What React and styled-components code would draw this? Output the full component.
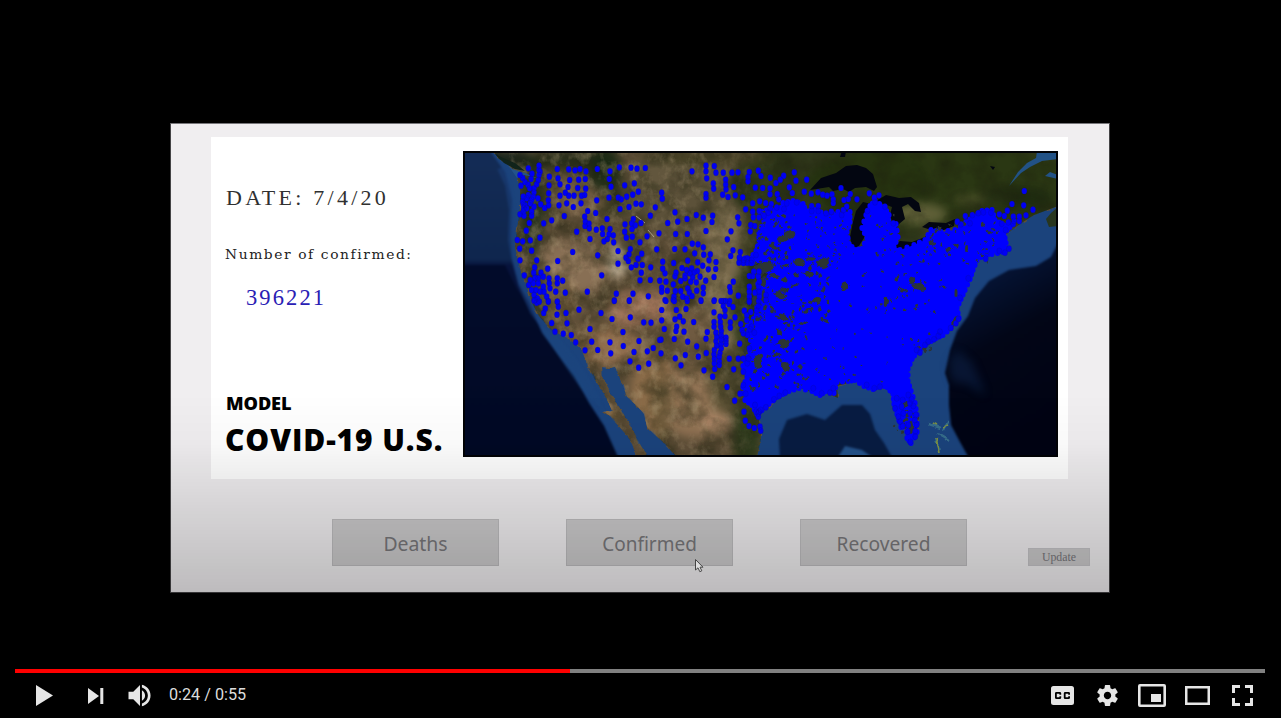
import React from "react";
import styled, { createGlobalStyle } from "styled-components";

const GlobalStyle = createGlobalStyle`
  * { box-sizing: border-box; }
  body { margin: 0; background: #000; overflow: hidden; }
`;

const Player = styled.main`
  position: relative;
  display: flex;
  flex-direction: column;
  width: 1281px;
  height: 718px;
  background: #000;
  overflow: hidden;
`;

const Stage = styled.section`
  height: 669px;
  padding: 123px 0 0 170px;
`;

const Window = styled.div`
  position: relative;
  display: flex;
  flex-direction: column;
  width: 940px;
  height: 470px;
  padding: 13px 41px 0;
  background: #f0eef0;
  border: 1px solid #454446;
  border-top-color: #77767a;
`;

const Shade = styled.div`
  position: absolute;
  inset: 270px -1px -1px;
  background: linear-gradient(rgba(0, 0, 0, 0), rgba(0, 0, 0, 0.025) 25%, rgba(0, 0, 0, 0.07) 42%, rgba(0, 0, 0, 0.21));
  pointer-events: none;
`;

const Card = styled.div`
  display: flex;
  width: 857px;
  height: 342px;
  margin-left: -1px;
  background: #fff;
`;

const Info = styled.div`
  display: flex;
  flex-direction: column;
  width: 252px;
  padding: 46px 0 0 15px;
  white-space: nowrap;
`;

const Readout = styled.div`
  font-family: ${(p) => p.$face || '"Liberation Serif"'}, serif;
  font-size: ${(p) => p.$size}px;
  line-height: 30px;
  letter-spacing: ${(p) => p.$track}px;
  color: ${(p) => p.$color};
  margin: ${(p) => p.$margin};
`;

const Title = styled.div`
  font-family: "Open Sans", sans-serif;
  font-weight: 800;
  font-size: ${(p) => p.$size}px;
  line-height: ${(p) => p.$line}px;
  letter-spacing: ${(p) => p.$track}px;
  color: #000;
  margin: ${(p) => p.$top || 0}px 0 0 ${(p) => p.$left || 0}px;
`;

const MapFrame = styled.svg`
  display: block;
  width: 595px;
  height: 306px;
  margin-top: 14px;
`;

const Actions = styled.div`
  display: flex;
  align-items: flex-start;
  padding: 40px 0 0 120px;
`;

const ActionButton = styled.button`
  width: 167px;
  height: 47px;
  flex: none;
  margin-right: ${(p) => p.$gap}px;
  padding: 1px 0 0;
  border: 1px solid #bdbcbe;
  background: #cbcacb;
  color: #78777a;
  font: ${(p) => p.$size || 19.6}px/46px "Noto Sans", sans-serif;
`;

const UpdateButton = styled.button`
  width: 62px;
  height: 18px;
  flex: none;
  margin-top: 29px;
  padding: 0;
  border: 1px solid #c4c3c6;
  background: #cac9ca;
  color: #77767a;
  font: 11.8px/16px "Liberation Serif", serif;
`;

const Pointer = styled.svg`
  position: absolute;
  left: 694px;
  top: 558px;
  width: 10px;
  height: 15px;
`;

const Track = styled.div`
  height: 4px;
  margin: 0 16px 0 15px;
  background: #808080;
`;

const Played = styled.div`
  width: 555px;
  height: 4px;
  background: #f00;
`;

const Controls = styled.div`
  display: flex;
  justify-content: space-between;
  height: 45px;
  padding: 0 28px 0 36px;
`;

const Group = styled.div`
  display: flex;
  align-items: center;
`;

const Icon = styled.svg`
  display: block;
  flex: none;
  width: ${(p) => p.$w}px;
  height: ${(p) => p.$h}px;
  margin-left: ${(p) => p.$left || 0}px;
  fill: #e6e6e6;
`;

const Time = styled.span`
  margin-left: 17px;
  margin-top: -2px;
  font: 16.2px/20px Roboto, sans-serif;
  color: #ddd;
  white-space: pre;
`;

// Each sheet: tile origin, then x,y pairs at three units per map pixel.
const SHEETS = [
  [460, 145, `205,70 237,62 237,75 237,90 292,72 326,73 345,76 360,72 378,79 412,72 450,79 478,67 513,68 531,71 556,69
   180,90 188,99 216,86 213,102 195,111 204,119 209,130 235,105 230,118 222,130 222,142 183,122 268,95 294,100 329,105 356,104 376,102 448,102
   267,121 300,118 324,126 353,129 377,131 453,125 494,121 523,115 240,80 266,145 265,166 266,181 254,189 234,160 242,178 220,155 215,165 200,160 190,155 188,170
   195,180 200,190 190,200 180,208 192,212 215,200 215,212 222,185 205,150 191,190 190,178 211,175 300,152 316,143 326,152 342,152 365,152 374,150 410,166 447,158 475,158 484,163 500,155 518,149 535,140
   297,181 320,175 340,186 363,175 383,198 407,204 480,192 507,186 528,176 544,178 586,187 571,212 313,213 275,226 251,235 208,234 199,257 240,278 211,286 188,289 172,285 179,311 215,317 180,346 230,346
   350,260 374,215 376,230 375,243 387,236 388,250 409,254 390,282 441,222 427,250 428,267 450,252 447,268 442,282 432,289 460,271 461,292 495,238 520,222 515,235 526,241 543,234 516,252 494,260 499,278 517,275 561,274 597,265 540,292 590,313
   338,321 413,331 293,348 474,318 474,356 511,312 507,328 498,338 505,348 545,326 534,341 528,360 547,360 514,367 572,367 425,391 382,440 316,443 544,383 540,406 571,405 599,407 469,446 463,466 508,466 519,446 565,454
   224,367 263,371 193,391 221,383 243,383 211,405 225,398 235,400 250,395 267,400 292,400 308,407 206,420 220,415 235,415 250,425 268,415 270,430 292,415 287,440 215,435 228,435 240,440 252,440 260,455 265,470 222,450 232,460 238,470 225,465 292,470`],
  [660, 145, `96,79 138,62 138,79 140,100 163,63 168,83 190,83 216,83 234,82 268,81 295,77 303,93 264,96 264,109 197,104 197,119 160,115 161,131 198,133 221,126 286,128 308,129 331,98 371,92 361,104 348,114 403,82 408,107 440,104 388,127 397,144 433,140 330,130 330,148 352,147 356,163
   454,146 474,142 488,149 501,152 516,148 520,163 520,174 543,129 571,147 565,162 552,165 591,163 138,147 138,158 188,149 204,156 226,151 248,157 278,175 299,169 317,174 334,177 5,143 7,161 45,202 81,222 53,230 23,234 109,210 130,218 158,212 156,231 233,217 237,235 257,193 278,200 280,217
   330,190 350,187 380,175 410,172 372,192 455,183 475,183 455,198 475,198 498,205 514,200 550,195 560,185 545,210 298,198 312,212 325,203 297,217
   47,267 82,267 138,258 213,259 202,283 272,240 284,243 271,259 97,296 114,298 130,307 75,313 44,312 104,325 131,329 151,328 219,316 212,333 241,321 238,338 237,353 252,345 250,354 262,353 275,345 273,354 262,340 288,330 8,350 41,354 83,347 113,352 147,346 168,351 128,362 145,373 167,372 162,396 137,407
   220,410 209,426 211,440 235,452 163,466 183,468 197,468 209,468 268,393 281,380 297,380 268,425 268,440 268,455 268,468 285,443 66,369 8,371 15,385 48,383 45,394 80,375 95,370 90,385 75,392 103,382 112,378 120,395 98,397 18,410 40,418 62,408 75,400 92,410 109,412 130,428 130,445
   5,428 22,437 46,438 62,438 83,430 88,442 110,437 5,440 15,465 40,465 42,455 68,455 80,460 96,453 123,466 295,395 298,410 296,425 297,440 298,455 296,468 278,393 318,450 318,465`],
  [860, 145, `493,138 456,177 491,181 519,194 442,197 498,211 433,213 418,208 316,213 337,210 292,230 447,311 435,323 377,341 355,204 393,203 28,145 57,151 43,158 370,202 460,215 445,232 462,228 478,228 460,237 478,215 45,172 75,185 22,198 100,235 303,238 330,235 425,236 437,255 418,318 325,400 300,458`],
  [460, 300, `230,8 222,2 265,3 292,5 295,20 256,26 251,39 291,44 318,39 357,29 423,39 463,3 508,3 511,52 456,57 275,69 321,70 551,67 573,68 285,95 310,101 334,105 390,87 489,96 347,127 395,125 450,127 490,138 537,123 375,151 413,150 452,160 522,156 562,154 580,144 510,184 566,191 536,203 599,120`],
  [660, 300, `18,3 43,3 82,3 123,3 162,3 190,3 5,30 49,30 78,27 59,50 5,61 45,58 70,64 101,66 13,87 50,80 48,93 72,95 3,119 43,117 3,160 83,125 110,139 46,175 76,165 63,196 115,170 139,159 132,211 158,230 162,37 162,66 162,80 180,50 181,66 142,96 138,116 195,30 195,48 190,18 207,12 219,21 225,52 211,67 211,83
   168,98 170,111 168,124 170,137 163,150 162,163 163,176 163,190 164,207 182,80 184,93 184,106 184,119 183,132 184,145 180,158 178,170 178,184 178,195 198,113 198,123 198,132 208,176 221,208 235,176 250,176 265,176 239,131 268,145 201,261 224,302 240,281 257,281 252,335 256,362 267,378 283,384 300,380 302,392 295,350 297,335 285,315
   253,32 272,36 260,45 260,60 242,72 246,90 250,100 268,5 270,88 262,105 250,215 250,255 262,190 295,18 290,32 275,80 283,98 288,335 302,330 318,322 342,298 358,288 376,278 295,340 460,265 485,280 510,278 520,265`],
  [860, 300, `105,325 125,320 150,310 160,318 115,350 120,365 128,378 145,375 143,395 165,360 170,375 166,393 166,410 151,426 130,340 150,340 168,345 145,285 155,298 110,295 128,300 295,57 288,70 272,84 235,108 222,118 205,125 180,158 170,150 43,265 60,260 20,255 240,95 195,135`],
];

const DOTS = SHEETS.flatMap(([ox, oy, text]) =>
  text.trim().split(/\s+/).map((pair) => {
    const [x, y] = pair.split(",").map(Number);
    return [ox + x / 3, oy + y / 3];
  })
);

const random = (seed) => () => {
  seed = (seed * 1664525 + 1013904223) % 4294967296;
  return seed / 4294967296;
};

const DENSE =
  "759,233 764,221 762,212 771,209 778,213 783,203 793,201 803,204 806,211 815,210 827,215 838,212 850,212 850,222 847,232 849,244 855,250 862,249 867,238 862,228 866,215 870,206 875,201 884,207 889,215 888,225 896,224 898,237 894,247 892,251 900,250 914,245 925,240 931,230 941,232 955,230 966,222 974,217 982,211 992,210 995,220 1003,225 1010,227 1004,233 1006,243 1003,252 992,254 985,254 977,260 973,270 970,279 965,290 961,299 957,308 959,318 951,328 943,335 936,338 926,344 917,352 912,359 908,369 908,381 911,391 915,403 917,415 917,432 911,443 907,438 907,426 901,427 897,414 894,404 893,394 887,387 881,385 873,389 864,386 855,380 848,381 837,382 834,393 826,391 820,395 812,391 799,388 789,391 777,397 769,404 762,410 757,414 752,405 745,400 743,387 747,377 743,366 748,357 752,346 749,334 744,330 751,323 756,315 758,299 758,284 769,277 765,264 758,260 752,263 741,262 740,258 750,259 756,251 759,242";

// Gaps between counties, small inside and wider on the plains side.
const GAPS = (() => {
  const r = random(71);
  const list = [];
  const fill = (count, x, y, w, h, max) => {
    for (let i = 0; i < count; i += 1) {
      list.push([x + r() * w, y + r() * h, 0.5 + r() * max, 0.5 + r() * max * 1.2, r() * 180]);
    }
  };
  fill(70, 755, 210, 40, 58, 1.3);
  fill(85, 757, 258, 72, 62, 1.75);
  fill(120, 744, 300, 64, 90, 1.55);
  fill(22, 820, 250, 65, 75, 1.1);
  fill(55, 805, 213, 42, 50, 0.6);
  fill(40, 890, 245, 100, 20, 0.9);
  fill(36, 930, 222, 68, 30, 1.5);
  fill(30, 870, 265, 75, 50, 0.9);
  fill(25, 810, 330, 80, 55, 0.7);
  fill(20, 895, 393, 22, 40, 1.7);
  fill(10, 868, 215, 27, 30, 0.8);
  fill(14, 900, 333, 38, 18, 1.0);
  return list.concat([
    [782, 239, 6, 3, 0], [789, 235, 4, 7, 60], [773, 247, 5, 2, 20], [799, 262, 6, 4, 10], [823, 263, 6, 5, 0],
    [811, 259, 5, 1.7, 0], [762, 282, 4, 4, 0], [844, 287, 3, 5, 0], [817, 300, 5, 3, 0], [783, 317, 5, 3, 30],
    [784, 343, 6, 4, 10], [758, 363, 4, 6, 0], [785, 367, 4, 5, 0], [779, 332, 3, 3, 0], [827, 322, 2, 2, 0],
    [919, 287, 7, 3, 22], [912, 281, 3, 3, 0], [897, 278, 2, 4, 20], [904, 291, 4, 1.5, 0], [967, 249, 2, 4, 0],
    [886, 302, 2, 5, 10], [917, 306, 2, 2, 0], [956, 293, 1.5, 4, 0], [911, 428, 2, 6, 0], [925, 349, 2, 3, 30],
    [955, 320, 2, 5, 20], [906, 404, 2, 3, 0], [809, 274, 4, 3, 0], [780, 296, 5, 3, 20], [756, 300, 3, 6, 0],
    [765, 268, 9, 5, 0], [757, 272, 6, 7, 0], [775, 276, 6, 2, 0], [763, 296, 2.5, 7, 0],
  ]);
})();

const EDGE = (() => {
  const pts = DENSE.split(" ").map((s) => s.split(",").map(Number));
  const out = [];
  pts.forEach(([x, y], i) => {
    const [nx, ny] = pts[(i + 1) % pts.length];
    out.push([x, y], [(x + nx) / 2, (y + ny) / 2]);
  });
  return out;
})();

const LAND =
  "M493 151 L499 159 510 165 517 176 520 190 520 208 517 229 515 246 518 262 525 281 532 303 539 316 551 330 567 338 581 348 587 364 595 380 604 394 609 404 612 411 603 411 610 416 614 421 624 432 632 443 637 457 649 457 641 446 633 430 626 418 618 405 609 390 603 379 602 367 606 369 615 367 622 383 627 397 638 407 644 414 647 427 657 437 667 446 676 457 L757 457 761 440 761 431 758 415 769 407 783 394 800 388 811 392 826 393 838 398 837 386 855 381 869 389 887 387 893 398 897 415 910 440 917 439 918 421 914 405 908 382 909 365 919 351 940 337 957 324 959 306 971 275 981 258 1004 251 1004 236 1020 224 1034 215 1058 206 V151 Z";

const TERRAIN = [
  ["#102019", 507, 159, 27, 8, 0.9], ["#20301d", 531, 205, 12, 52, 0.9], ["#1c2815", 570, 160, 45, 10, 0.8],
  ["#162813", 605, 172, 17, 26, 0.85], ["#263017", 550, 200, 14, 18, 0.5], ["#293217", 620, 205, 28, 12, 0.6],
  ["#253018", 538, 293, 12, 36, 0.55], ["#92775b", 573, 267, 35, 28, 0.8], ["#cbbba2", 617, 262, 9, 16, 1],
  ["#82654b", 577, 199, 31, 15, 0.6], ["#5c5139", 685, 195, 60, 45, 0.85], ["#bd866a", 640, 309, 32, 19, 0.7],
  ["#2d331f", 632, 253, 9, 22, 0.5], ["#2e2f1a", 682, 283, 18, 32, 0.5], ["#7b6c4e", 724, 275, 24, 72, 0.9],
  ["#8a6a48", 560, 300, 15, 22, 0.6], ["#3c3420", 612, 335, 34, 7, 0.4], ["#9b7452", 605, 345, 37, 20, 0.8],
  ["#9d7750", 654, 395, 24, 44, 0.7], ["#9c7a5a", 695, 402, 38, 36, 0.8], ["#4d4528", 662, 413, 9, 38, 0.5],
  ["#b28b6c", 717, 424, 15, 12, 0.8], ["#273819", 747, 435, 14, 40, 0.85], ["#454328", 731, 382, 23, 35, 0.7],
  ["#2d3718", 772, 250, 30, 120, 0.6], ["#2c3618", 830, 185, 100, 50, 0.9], ["#263615", 850, 310, 120, 100, 0.8],
  ["#25340f", 950, 185, 145, 45, 0.9], ["#62623a", 920, 214, 27, 11, 0.95], ["#5b5d32", 983, 200, 30, 5, 0.7],
  ["#1c2a10", 1018, 198, 36, 12, 0.7], ["#3f3b1f", 705, 158, 70, 8, 0.8], ["#b98b57", 610, 414, 5, 9, 0.7],
  ["#655a40", 655, 175, 22, 18, 0.7], ["#806549", 690, 325, 26, 20, 0.5],
];

const dotPath = (list, rx, ry) =>
  list.map(([x, y]) => `M${(x - rx).toFixed(1)} ${y.toFixed(1)}a${rx} ${ry} 0 1 0 ${rx * 2} 0a${rx} ${ry} 0 1 0 ${-rx * 2} 0`).join("");

function CaseMap() {
  return (
    <MapFrame viewBox="463 151 595 306" aria-label="Map of confirmed cases">
      <defs>
        <linearGradient id="pacific" x1="0" y1="0" x2="0" y2="1">
          <stop offset="0" stopColor="#142c56" />
          <stop offset=".36" stopColor="#0f264e" />
          <stop offset=".38" stopColor="#07133c" />
          <stop offset="1" stopColor="#020922" />
        </linearGradient>
        <linearGradient id="atlantic" x1=".2" y1="0" x2=".5" y2="1">
          <stop offset="0" stopColor="#0b2048" />
          <stop offset=".25" stopColor="#051231" />
          <stop offset=".5" stopColor="#020617" />
          <stop offset="1" stopColor="#010313" />
        </linearGradient>
        <linearGradient id="westward" x1="0" x2="1">
          <stop offset=".72" stopColor="#fff" />
          <stop offset="1" stopColor="#000" />
        </linearGradient>
        <mask id="westMask" maskUnits="userSpaceOnUse" x="463" y="151" width="320" height="306">
          <rect x="463" y="151" width="320" height="306" fill="url(#westward)" />
        </mask>
        <filter id="soft" x="-50%" y="-50%" width="200%" height="200%" colorInterpolationFilters="sRGB"><feGaussianBlur stdDeviation="5" /></filter>
        <filter id="coast" x="-10%" y="-10%" width="120%" height="120%" colorInterpolationFilters="sRGB"><feGaussianBlur stdDeviation="1.3" /></filter>
        <filter id="relief" x="0" y="0" width="100%" height="100%" colorInterpolationFilters="sRGB">
          <feTurbulence type="fractalNoise" baseFrequency=".04 .045" numOctaves="5" seed="8" />
          <feColorMatrix values="0 0 0 0 .12  0 0 0 0 .13  0 0 0 0 .06  1.7 .9 0 0 -1.05" />
        </filter>
        <filter id="ridges" x="0" y="0" width="100%" height="100%" colorInterpolationFilters="sRGB">
          <feTurbulence type="fractalNoise" baseFrequency=".1 .08" numOctaves="4" seed="23" />
          <feColorMatrix values="0 0 0 0 .72  0 0 0 0 .64  0 0 0 0 .5  0 2.2 1 0 -1.5" />
        </filter>
        <filter id="shore" x="-5%" y="-5%" width="110%" height="110%" colorInterpolationFilters="sRGB">
          <feTurbulence type="fractalNoise" baseFrequency=".12" numOctaves="3" seed="4" />
          <feDisplacementMap in="SourceGraphic" scale="5" xChannelSelector="R" yChannelSelector="G" />
        </filter>
        <clipPath id="landClip"><path d={LAND} /></clipPath>
      </defs>
      <rect x="463" y="151" width="595" height="306" fill="#1b437c" />
      <g filter="url(#coast)">
        <path d="M460 148H488L505 172 512 200 511 238 512 258 519 284 529 302 542 333 558 355 574 376 589 403 604 426 618 457H460Z" fill="url(#pacific)" />
        <path d="M460 265H505L517 289 529 307 542 333 558 355 574 376 589 403 604 426 618 460H460Z" fill="#020a25" opacity=".75" />
        <path d="M1062 235L1051 257 1036 266 1009 270 989 281 975 298 968 316 957 331 950 350 945 373 949 385 949 405 951 425 960 442 970 460H1062Z" fill="url(#atlantic)" />
        <path d="M780 459L779 439 787 420 807 414 825 420 842 405 862 405 870 414 875 430 884 443 893 459Z" fill="#081c42" />
        <path d="M838 457L845 446 862 450 875 459Z" fill="#24528a" />
        <path d="M500 168L508 185 512 210 511 240 515 262 521 285 533 312 550 335 570 360 587 385 600 408" stroke="#1a407a" strokeWidth="6" fill="none" opacity=".6" />
        <path d="M540 325L559 338 573 355 589 379 599 397 604 412 581 389 565 366 552 346Z" fill="#1c4880" opacity=".5" />
      </g>
      <path d="M948 363L957 350 972 362 986 396 968 384 952 382Z" fill="#153568" opacity=".35" filter="url(#soft)" />
      <g filter="url(#shore)">
        <path d={LAND} fill="#5f4f38" />
      </g>
      <g clipPath="url(#landClip)">
        <g filter="url(#soft)">
          {TERRAIN.map(([fill, cx, cy, rx, ry, opacity], i) => (
            <ellipse key={i} cx={cx} cy={cy} rx={rx} ry={ry} fill={fill} opacity={opacity} />
          ))}
        </g>
        <rect x="463" y="151" width="595" height="306" filter="url(#relief)" opacity=".55" />
        <g mask="url(#westMask)">
          <rect x="463" y="151" width="320" height="306" filter="url(#ridges)" opacity=".36" />
        </g>
      </g>
      <g fill="#030611">
        <path d="M810 190L821 178 836 173 846 166 857 165 866 168 873 174 877 187 874 191 866 187 855 188 849 192 843 189 833 191 829 187Z" />
        <path d="M850 237L853 222 856 211 863 202 871 204 865 215 866 226 864 238 859 246 853 249Z" />
        <path d="M876 201L886 195 899 198 911 197 919 203 921 212 915 211 908 204 902 207 905 219 899 224 895 231 890 215 892 207Z" />
        <path d="M891 247L900 241 912 242 925 237 932 229 933 235 923 243 907 249 896 251Z" />
        <path d="M922 227L929 222 946 223 955 219 954 226 944 230 928 229Z" />
        <path d="M842 151H846L845 157 840 157Z" /><path d="M990 166L995 167 993 170Z" />
      </g>
      <path d="M1009 186L1018 172 1027 163 1036 158 1037 151H1058V159L1042 161 1030 167 1021 173Z" fill="#225286" />
      <path d="M1045 176L1050 172 1058 175V179Z" fill="#225286" />
      <path d="M1058 207L1051 213 1046 219 1049 227 1058 226Z" fill="#28361e" />
      <path d="M502 159L512 169 525 173 539 179 525 175 517 178 510 168Z" fill="#23528a" />
      <path d="M495 154L503 158 515 163 525 171 515 169 504 163Z" fill="#11231a" />
      <path d="M636 216L645 223 M648 230L654 237" stroke="#b8b09a" strokeWidth=".8" fill="none" />
      <polygon points={DENSE} fill="#0000fe" />
      <path d={dotPath(EDGE, 2.6, 3)} fill="#0000fe" />
      <g fill="#2b3434" filter="url(#shore)">
        {GAPS.map(([x, y, rx, ry, a], i) => (
          <ellipse key={i} cx={x} cy={y} rx={rx} ry={ry} transform={`rotate(${a} ${x} ${y})`} />
        ))}
      </g>
      <path d={dotPath(DOTS, 2.6, 3.1)} fill="#0000f4" stroke="#101070" strokeOpacity=".35" strokeWidth=".5" />
      <g filter="url(#shore)">
        <path d="M929 424L941 428M935 440L940 450M944 430L948 422M937 434L949 441" stroke="#4a8a95" strokeWidth="2.4" fill="none" opacity=".6" />
        <path d="M936 439L939 453M933 423L937 425M944 427L948 425" stroke="#7a8f45" strokeWidth="1.8" fill="none" />
      </g>
      <rect x="464" y="152" width="593" height="304" fill="none" stroke="#020306" strokeWidth="2" />
    </MapFrame>
  );
}

export default function App() {
  return (
    <Player>
      <GlobalStyle />
      <Stage>
        <Window>
          <Card>
            <Info>
              <Readout $size={22} $track={3.25} $color="#303030" $margin="0">DATE: 7/4/20</Readout>
              <Readout $face={'"DejaVu Serif"'} $size={13.8} $track={1.6} $color="#222" $margin="26px 0 0 -1px">Number of confirmed:</Readout>
              <Readout $size={22.5} $track={2.1} $color="#2920b4" $margin="14px 0 0 20px">396221</Readout>
              <Title $size={18.2} $line={24} $track={-0.1} $top={78}>MODEL</Title>
              <Title $size={30} $line={40} $track={0.9} $top={5} $left={-1}>COVID-19 U.S.</Title>
            </Info>
            <CaseMap />
          </Card>
          <Actions>
            <ActionButton $gap={67} $size={19.4}>Deaths</ActionButton>
            <ActionButton $gap={67} $size={19}>Confirmed</ActionButton>
            <ActionButton $gap={61} $size={19.2}>Recovered</ActionButton>
            <UpdateButton>Update</UpdateButton>
          </Actions>
          <Shade />
        </Window>
      </Stage>
      <Pointer viewBox="0 0 10 15">
        <path d="M1.5 1.5V12L4 9.8 5.8 13.7 7.8 12.8 6 9.2H9Z" fill="#dedede" stroke="#454545" />
      </Pointer>
      <Track><Played /></Track>
      <Controls>
        <Group>
          <Icon $w={17} $h={21} viewBox="0 0 17 21"><path d="M0 0L17 10.5 0 21Z" /></Icon>
          <Icon $w={16} $h={16} $left={35} viewBox="0 0 16 16"><path d="M0 0L11 8 0 16ZM12.3 0H15.3V16H12.3Z" /></Icon>
          <Icon $w={24} $h={23} $left={24} viewBox="0 0 24 24">
            <path d="M0 8H5L12 1V23L5 16H0ZM14 6.5C16 7.6 17.3 9.6 17.3 12S16 16.4 14 17.5ZM14 .8C19.2 2 23 6.5 23 12S19.2 22 14 23.2V20.4C17.6 19.3 20.2 15.9 20.2 12S17.6 4.7 14 3.6Z" />
          </Icon>
          <Time>0:24 / 0:55</Time>
        </Group>
        <Group>
          <Icon $w={23} $h={19} viewBox="0 0 23 19">
            <path fillRule="evenodd" d="M2.5 0H20.5Q23 0 23 2.5V16.5Q23 19 20.5 19H2.5Q0 19 0 16.5V2.5Q0 0 2.5 0ZM5.4 6Q4 6 4 7.3V11.7Q4 13 5.4 13H8.8Q10.2 13 10.2 11.7V10.3H8.4V11.3H5.8V7.7H8.4V8.7H10.2V7.3Q10.2 6 8.8 6ZM14.2 6Q12.8 6 12.8 7.3V11.7Q12.8 13 14.2 13H17.6Q19 13 19 11.7V10.3H17.2V11.3H14.6V7.7H17.2V8.7H19V7.3Q19 6 17.6 6Z" />
          </Icon>
          <Icon $w={21} $h={21} $left={23} viewBox="2 2 20 20">
            <path d="M19.43 12.98c.04-.32.07-.64.07-.98s-.03-.66-.07-.98l2.11-1.65c.19-.15.24-.42.12-.64l-2-3.46c-.12-.22-.39-.3-.61-.22l-2.49 1c-.52-.4-1.08-.73-1.69-.98l-.38-2.65C14.46 2.18 14.25 2 14 2h-4c-.25 0-.46.18-.49.42l-.38 2.65c-.61.25-1.17.59-1.69.98l-2.49-1c-.23-.09-.49 0-.61.22l-2 3.46c-.13.22-.07.49.12.64l2.11 1.65c-.04.32-.07.65-.07.98s.03.66.07.98l-2.11 1.65c-.19.15-.24.42-.12.64l2 3.46c.12.22.39.3.61.22l2.49-1c.52.4 1.08.73 1.69.98l.38 2.65c.03.24.24.42.49.42h4c.25 0 .46-.18.49-.42l.38-2.65c.61-.25 1.17-.59 1.69-.98l2.49 1c.23.09.49 0 .61-.22l2-3.46c.12-.22.07-.49-.12-.64zM12 15.5c-1.93 0-3.5-1.57-3.5-3.5s1.57-3.5 3.5-3.5 3.5 1.57 3.5 3.5-1.57 3.5-3.5 3.5z" />
          </Icon>
          <Icon $w={28} $h={23} $left={20} viewBox="0 0 28 23">
            <path fillRule="evenodd" d="M2 0H26Q28 0 28 2V21Q28 23 26 23H2Q0 23 0 21V2Q0 0 2 0ZM2.6 2.6V20.4H25.4V2.6ZM13 10H23V18H13Z" />
          </Icon>
          <Icon $w={25} $h={19} $left={19} viewBox="0 0 25 19"><path fillRule="evenodd" d="M0 0H25V19H0ZM2.5 2.5V16.5H22.5V2.5Z" /></Icon>
          <Icon $w={21} $h={21} $left={22} viewBox="0 0 21 21">
            <path d="M0 0H8V3H3V8H0ZM13 0H21V8H18V3H13ZM0 13H3V18H8V21H0ZM18 13H21V21H13V18H18Z" />
          </Icon>
        </Group>
      </Controls>
    </Player>
  );
}
